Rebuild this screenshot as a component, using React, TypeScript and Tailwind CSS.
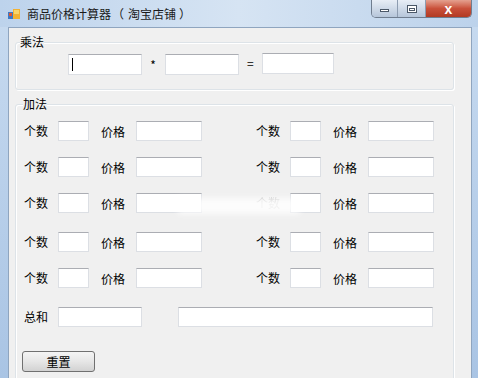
import React from 'react';

const Box: React.FC<{ w: string; extra?: string }> = ({ w, extra = '' }) => (
  <div className={`h-[20px] ${w} ${extra} bg-white border border-[#dcdfe4] border-t-[#abadb3] shrink-0`} />
);

const Cell: React.FC<{ ml: string; faded?: boolean }> = ({ ml, faded }) => (
  <div className={`flex items-center ${ml}`}>
    <span className={`w-[24px] leading-[14px] -mt-[1px] ${faded ? 'opacity-20' : ''}`}>个数</span>
    <Box w="w-[31px]" extra="ml-[10px]" />
    <span className="w-[24px] ml-[12px] leading-[14px] mt-[2px]">价格</span>
    <Box w="w-[66px]" extra="ml-[11px]" />
  </div>
);

const rowMargins = ['', 'mt-[16px]', 'mt-[16px]', 'mt-[19px]', 'mt-[16px]'];

export default function App() {
  return (
    <div className="relative w-[478px] h-[378px] overflow-hidden flex flex-col bg-gradient-to-b from-[#c8dbf0] to-[#a9c4e4] text-[12px] text-black font-['Noto_Sans_CJK_SC','Liberation_Sans',sans-serif]">
      {/* title bar */}
      <div className="h-[27px] flex items-start shrink-0 bg-gradient-to-r from-[#bdd3ec] via-[#d6e4f3] to-[#bcd2eb]">
        <svg className="ml-[8px] mt-[9px]" width="12" height="11" viewBox="0 0 12 11">
          <rect x="0" y="3" width="5" height="7" fill="#3f79c4" />
          <rect x="1" y="4" width="3" height="3" fill="#e2572c" />
          <rect x="5" y="0" width="7" height="10" fill="#f2b233" />
          <rect x="6" y="1" width="5" height="4" fill="#f8d46a" />
        </svg>
        <span className="ml-[7px] mt-[6px] leading-[16px] text-[#1a1a1a] flex">
          商品价格计算器
          <span className="w-[14px] text-center">（</span>
          <span className="ml-[3px]">淘宝店铺</span>
          <span className="w-[14px] ml-[2px] text-center">）</span>
        </span>
        <div className="flex-1" />
        <div className="flex h-[18px] mr-[6px] rounded-b-[5px] overflow-hidden border border-t-0 border-[#6f7d8f]">
          <div className="w-[26px] flex items-center justify-center bg-gradient-to-b from-[#e8eef6] to-[#b6c6da] border-r border-[#8d9cb0]">
            <div className="w-[9px] h-[3px] bg-white border border-[#4b5868] mt-[4px]" />
          </div>
          <div className="w-[28px] flex items-center justify-center bg-gradient-to-b from-[#e8eef6] to-[#b6c6da] border-r border-[#8d9cb0]">
            <div className="w-[10px] h-[8px] border border-[#4b5868] bg-white flex items-center justify-center">
              <div className="w-[6px] h-[3px] border border-[#4b5868] mt-[1px]" />
            </div>
          </div>
          <div className="w-[45px] flex items-center justify-center bg-gradient-to-b from-[#e4a08f] via-[#c9503a] to-[#b23a22]">
            <span className="text-white font-bold text-[14px] leading-[14px] font-['Liberation_Sans',sans-serif]">x</span>
          </div>
        </div>
      </div>

      {/* client area */}
      <div className="flex-1 flex pl-[8px] pr-[6px]">
        <div className="flex-1 bg-[#f0f0f0] border border-b-0 border-[#8fa5bf] overflow-hidden">
          {/* 乘法 */}
          <div className="relative ml-[6px] mt-[14px] w-[439px] h-[48px] border border-[#dde3e8] rounded-[3px] shadow-[inset_1px_1px_0_#ffffff,1px_1px_0_#ffffff] pt-[11px]">
            <span className="absolute left-[4px] -top-[8px] bg-[#f0f0f0] leading-[14px]">乘法</span>
            <div className="flex items-center">
              <div className="ml-[52px] w-[74px] h-[21px] bg-white border border-[#dcdfe4] border-t-[#abadb3] flex items-center pl-[3px]">
                <div className="w-[1px] h-[13px] bg-black" />
              </div>
              <span className="ml-[8px] w-[6px] text-center leading-[14px]">*</span>
              <div className="ml-[9px] w-[74px] h-[21px] bg-white border border-[#dcdfe4] border-t-[#abadb3]" />
              <span className="ml-[8px] w-[6px] text-center leading-[14px] -mt-[4px]">=</span>
              <div className="ml-[9px] w-[72px] h-[21px] -mt-[2px] bg-white border border-[#dcdfe4] border-t-[#abadb3]" />
            </div>
          </div>

          {/* 加法 */}
          <div className="relative ml-[6px] mt-[14px] w-[439px] h-[320px] border border-[#dde3e8] rounded-[3px] shadow-[inset_1px_1px_0_#ffffff,1px_1px_0_#ffffff] pt-[16px]">
            <span className="absolute left-[7px] -top-[8px] bg-[#f0f0f0] leading-[14px]">加法</span>
            {rowMargins.map((m, i) => (
              <div key={i} className={`flex h-[20px] ${m}`}>
                <Cell ml="ml-[8px]" />
                <Cell ml="ml-[54px]" faded={i === 2} />
              </div>
            ))}
            <div className="flex items-center h-[20px] mt-[19px]">
              <span className="ml-[8px] w-[24px] leading-[14px]">总和</span>
              <Box w="w-[84px]" extra="ml-[10px]" />
              <Box w="w-[255px]" extra="ml-[36px]" />
            </div>
            <button className="ml-[6px] mt-[24px] w-[73px] h-[21px] rounded-[3px] border border-[#707070] bg-gradient-to-b from-[#f4f4f4] via-[#e6e6e6] to-[#d2d2d2] leading-[14px] text-black">
              重置
            </button>
          </div>
        </div>
      </div>

      {/* smudge over row 3 */}
      <div className="absolute left-[178px] top-[198px] w-[122px] h-[16px] bg-white/80 blur-[3px]" />
    </div>
  );
}
